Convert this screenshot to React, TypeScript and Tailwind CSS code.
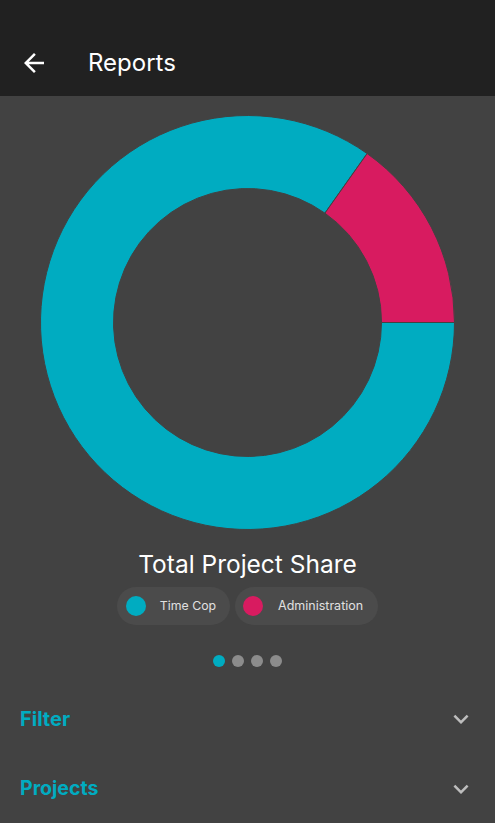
import React from "react";

function arcPath(cx: number, cy: number, R: number, r: number, a0: number, a1: number) {
  const rad = (d: number) => (d * Math.PI) / 180;
  const p = (rr: number, a: number) => [cx + rr * Math.cos(rad(a)), cy + rr * Math.sin(rad(a))];
  const large = a1 - a0 > 180 ? 1 : 0;
  const [x0, y0] = p(R, a0);
  const [x1, y1] = p(R, a1);
  const [x2, y2] = p(r, a1);
  const [x3, y3] = p(r, a0);
  return `M${x0} ${y0} A${R} ${R} 0 ${large} 1 ${x1} ${y1} L${x2} ${y2} A${r} ${r} 0 ${large} 0 ${x3} ${y3} Z`;
}

function Donut() {
  const R = 207;
  const r = 134;
  const c = 207.5;
  const split = -54.7;
  return (
    <svg width={415} height={415} viewBox="0 0 415 415">
      <path d={arcPath(c, c, R, r, 0, 360 + split)} fill="#00ACC1" stroke="#424242" strokeWidth={1} />
      <path d={arcPath(c, c, R, r, split, 0)} fill="#D81B60" stroke="#424242" strokeWidth={1} />
    </svg>
  );
}

function Chevron() {
  return (
    <svg width={30} height={30} viewBox="0 0 24 24" fill="#BDBDBD">
      <path d="M16.59 8.59L12 13.17 7.41 8.59 6 10l6 6 6-6z" />
    </svg>
  );
}

export default function App() {
  return (
    <div
      className="w-[495px] h-[823px] bg-[#424242] flex flex-col overflow-hidden"
      style={{ fontFamily: "Inter, Roboto, 'Liberation Sans', sans-serif" }}
    >
      <div className="h-[96px] bg-[#212121] flex items-end pb-[17px] shrink-0">
        <div className="ml-[19px] w-[30px] h-[30px] flex items-center justify-center mb-[1px]">
          <svg width={30} height={30} viewBox="0 0 24 24" fill="#ffffff">
            <path d="M20 11H7.83l5.59-5.59L12 4l-8 8 8 8 1.41-1.41L7.83 13H20v-2z" />
          </svg>
        </div>
        <div className="ml-[39px] text-white text-[24px] leading-[32px]">Reports</div>
      </div>

      <div className="flex flex-col items-center">
        <div className="mt-[19px] h-[415px] flex items-center justify-center">
          <Donut />
        </div>
        <div className="mt-[18px] text-white text-[24.5px] leading-[32px]">Total Project Share</div>
        <div className="mt-[7px] flex gap-[5px]">
          <div className="h-[38px] rounded-full bg-[#4b4b4b] flex items-center pl-[9px] pr-[14px]">
            <span className="w-[20px] h-[20px] rounded-full bg-[#00ACC1]" />
            <span className="ml-[14px] text-[12.3px] text-[#e0e0e0]">Time Cop</span>
          </div>
          <div className="h-[38px] rounded-full bg-[#4b4b4b] flex items-center pl-[8px] pr-[15px]">
            <span className="w-[20px] h-[20px] rounded-full bg-[#D81B60]" />
            <span className="ml-[15px] text-[12.5px] text-[#e0e0e0]">Administration</span>
          </div>
        </div>
        <div className="mt-[30px] flex gap-[7px]">
          <span className="w-[12px] h-[12px] rounded-full bg-[#00ACC1]" />
          <span className="w-[12px] h-[12px] rounded-full bg-[#8c8c8c]" />
          <span className="w-[12px] h-[12px] rounded-full bg-[#8c8c8c]" />
          <span className="w-[12px] h-[12px] rounded-full bg-[#8c8c8c]" />
        </div>
      </div>

      <div className="mt-[17px] flex flex-col">
        <div className="h-[70px] flex items-center justify-between pl-[20px] pr-[19px]">
          <span className="text-[20px] font-bold text-[#00ACC1]">Filter</span>
          <Chevron />
        </div>
        <div className="h-[70px] flex items-center justify-between pl-[20px] pr-[19px]">
          <span className="text-[19.5px] font-bold text-[#00ACC1]">Projects</span>
          <Chevron />
        </div>
      </div>
    </div>
  );
}
